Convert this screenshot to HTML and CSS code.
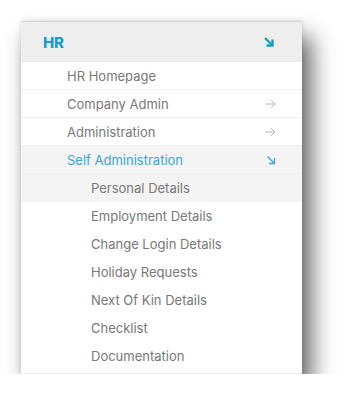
FILE: index.html
```html
<!DOCTYPE html>
<html>
<head>
<meta charset="utf-8">
<link rel="stylesheet" href="styles.css">
</head>
<body>
<div class="card">
  <div class="header">
    <span class="title">HR</span>
    <svg class="icon" width="12" height="12" viewBox="0 0 12 12"><path d="M2 2 L9 9 M3.5 9.5 H9.5 V3.5" fill="none" stroke="#1a9bcb" stroke-width="2.4"/></svg>
  </div>
  <ul class="menu">
    <li class="item l1 sep"><span>HR Homepage</span></li>
    <li class="item l1 sep"><span>Company Admin</span>
      <svg class="icon" width="11" height="10" viewBox="0 0 11 10"><path d="M0.5 5 H10 M6 1 L10 5 L6 9" fill="none" stroke="#b8b8b8" stroke-width="1"/></svg></li>
    <li class="item l1 sep"><span>Administration</span>
      <svg class="icon" width="11" height="10" viewBox="0 0 11 10"><path d="M0.5 5 H10 M6 1 L10 5 L6 9" fill="none" stroke="#b8b8b8" stroke-width="1"/></svg></li>
    <li class="item l1 active sep"><span>Self Administration</span>
      <svg class="icon" width="10" height="10" viewBox="0 0 10 10"><path d="M1.5 1.5 L8 8 M3 8.5 H8.5 V3" fill="none" stroke="#3aa6d6" stroke-width="1.4"/></svg></li>
    <li class="item l2 shaded"><span>Personal Details</span></li>
    <li class="item l2"><span>Employment Details</span></li>
    <li class="item l2"><span>Change Login Details</span></li>
    <li class="item l2"><span>Holiday Requests</span></li>
    <li class="item l2"><span>Next Of Kin Details</span></li>
    <li class="item l2"><span>Checklist</span></li>
    <li class="item l2"><span>Documentation</span></li>
  </ul>
</div>
</body>
</html>
```
FILE: styles.css
```css
html, body {
  margin: 0;
  padding: 0;
  background: #ffffff;
}
body {
  padding: 21px 0 0 21px;
  font-family: Inter, "Noto Sans", sans-serif;
}
.card {
  width: 281px;
  background: #ffffff;
  box-shadow: 9px 16px 22px rgba(0, 0, 0, 0.62), 0 0 5px rgba(0, 0, 0, 0.12);
  padding-bottom: 3px;
  border-bottom: 1px solid #eeeeee;
}
.header {
  height: 41px;
  background: #eeeeee;
  border-top: 1px solid #d4d4d4;
  box-sizing: border-box;
  display: flex;
  align-items: center;
  justify-content: space-between;
  padding: 0 27px 0 22px;
}
.title {
  font-weight: 800;
  font-size: 15px;
  color: #1a9bcb;
  letter-spacing: -0.3px;
}
.menu {
  list-style: none;
  margin: 0;
  padding: 0;
}
.item {
  height: 28px;
  box-sizing: border-box;
  display: flex;
  align-items: center;
  justify-content: space-between;
  font-size: 13px;
  color: #787878;
  padding-right: 26px;
}
.l1 { padding-left: 46px; }
.l2 { padding-left: 70px; }
.sep { border-bottom: 1px solid #f0f0f0; }
.active {
  background: #f4f4f4;
  color: #3aa6d6;
}
.shaded { background: #f4f4f4; }
.icon { display: block; flex: none; }
```
